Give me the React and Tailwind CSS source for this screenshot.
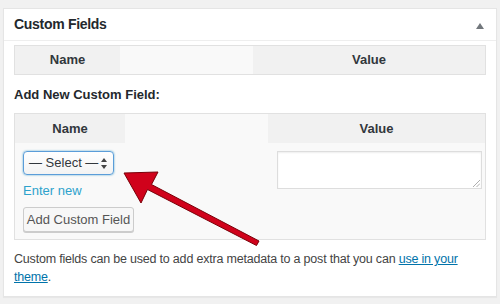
const font = { fontFamily: '"Liberation Sans", Arial, sans-serif' };

const App = () => {
    return (
        <div className="relative w-[500px] h-[304px] bg-[#f1f1f1] pt-[8px] px-[3px] overflow-hidden" style={font}>
            <div className="bg-white border border-[#e5e5e5] shadow-[0_1px_1px_rgba(0,0,0,0.04)] h-[289px]">
                {/* header */}
                <div className="h-[32px] flex items-center justify-between pl-[10px] pr-[12px] border-b border-[#eeeeee]">
                    <h2 className="text-[14px] font-bold tracking-[-0.3px] text-[#23282d]">Custom Fields</h2>
                    <svg width="8" height="6" viewBox="0 0 8 6" className="mt-[2px]">
                        <polygon points="4,0 8,6 0,6" fill="#72777c" />
                    </svg>
                </div>

                <div className="px-[10px] pt-[4px]">
                    {/* existing fields table */}
                    <div className="border border-[#e1e1e1] h-[30px] flex text-[13px] font-bold text-[#32373c]">
                        <div className="w-[105px] bg-[#f1f1f1] flex items-center justify-center">Name</div>
                        <div className="w-[133px] bg-[#f9f9f9]"></div>
                        <div className="flex-1 bg-[#f1f1f1] flex items-center justify-center">Value</div>
                    </div>

                    <p className="mt-[12px] text-[13px] font-bold text-[#23282d] leading-[16px]">Add New Custom Field:</p>

                    {/* add new table */}
                    <div className="mt-[10px] border border-[#e1e1e1] bg-[#f9f9f9] h-[127px]">
                        <div className="h-[29px] flex text-[13px] font-bold text-[#32373c]">
                            <div className="w-[110px] bg-[#f1f1f1] flex items-center justify-center">Name</div>
                            <div className="w-[143px]"></div>
                            <div className="flex-1 bg-[#f1f1f1] flex items-center justify-center">Value</div>
                        </div>
                        <div className="flex">
                            <div className="w-[253px] pl-[8px] pt-[8px]">
                                <div className="w-[91px] h-[24px] rounded-[4px] border border-[#5b9dd9] shadow-[0_0_2px_rgba(30,140,190,0.8)] bg-gradient-to-b from-white to-[#f3f3f3] flex items-center justify-between pl-[5px] pr-[6px] text-[13px] text-[#32373c] whitespace-nowrap">
                                    <span>— Select —</span>
                                    <svg width="6" height="11" viewBox="0 0 6 11">
                                        <polygon points="3,0 6,4 0,4" fill="#444" />
                                        <polygon points="0,7 6,7 3,11" fill="#444" />
                                    </svg>
                                </div>
                                <a className="block mt-[8px] text-[13px] text-[#2ea2cc] leading-[16px]">Enter new</a>
                                <button className="mt-[8px] h-[25px] w-[111px] rounded-[3px] border border-[#cccccc] bg-[#f7f7f7] shadow-[0_1px_0_#cccccc] text-[13px] text-[#555555] whitespace-nowrap">Add Custom Field</button>
                            </div>
                            <div className="flex-1 pl-[9px] pr-[3px] pt-[8px]">
                                <div className="relative h-[38px] border border-[#dddddd] bg-white shadow-[inset_0_1px_2px_rgba(0,0,0,0.07)]">
                                    <svg width="7" height="7" viewBox="0 0 7 7" className="absolute right-[1px] bottom-[1px]">
                                        <line x1="0" y1="7" x2="7" y2="0" stroke="#999" strokeWidth="0.8" />
                                        <line x1="3.5" y1="7" x2="7" y2="3.5" stroke="#999" strokeWidth="0.8" />
                                    </svg>
                                </div>
                            </div>
                        </div>
                    </div>

                    <p className="mt-[10px] text-[12.5px] tracking-[-0.2px] leading-[18px] text-[#444444]">
                        Custom fields can be used to add extra metadata to a post that you can <a className="text-[#0073aa] underline">use in your theme</a>.
                    </p>
                </div>
            </div>

            {/* red annotation arrow */}
            <svg className="absolute left-0 top-0 pointer-events-none" width="500" height="304" viewBox="0 0 500 304">
                <polygon
                    points="124,173 158,172 151.5,184.5 259,241 256.5,245.5 147.5,189.5 141,203"
                    fill="#d0021b"
                    stroke="#7a0008"
                    strokeWidth="1"
                    strokeLinejoin="miter"
                />
            </svg>
        </div>
    );
};

export default App;
